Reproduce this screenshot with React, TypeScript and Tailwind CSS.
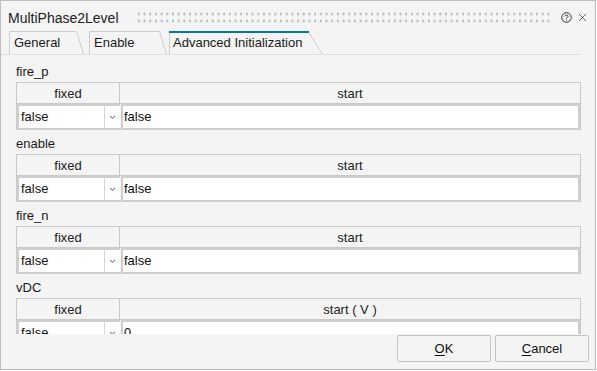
import { X } from "lucide-react";

const font = { fontFamily: '"Segoe UI", "Liberation Sans", Arial, sans-serif' };

interface ParamProps {
  name: string;
  startLabel?: string;
  value: string;
}

function Param({ name, startLabel = "start", value }: ParamProps) {
  return (
    <div className="pt-[4px]">
      <div className="h-[20px] text-[13px] leading-[19px] text-[#1a1a1a]">{name}</div>
      <div className="border border-[#c9c9c9] bg-[#f4f4f4]">
        <div className="grid grid-cols-[103px_1fr] h-[21px] border-b border-[#c9c9c9] text-[13px] leading-[21px] text-[#222]">
          <div className="text-center border-r border-[#c9c9c9]">fixed</div>
          <div className="text-center">{startLabel}</div>
        </div>
        <div className="grid grid-cols-[103px_1fr] gap-[1px] h-[25px]">
          <div className="flex bg-white border-2 border-[#cfcfcf] border-r-0">
            <div className="flex-1 pl-[2px] text-[13px] leading-[22px] text-[#111]">false</div>
            <div className="w-[16px] border-l border-[#d6d6d6] flex items-center justify-center">
              <svg width="7" height="5" viewBox="0 0 7 5">
                <path d="M1 1 L3.5 3.5 L6 1" fill="none" stroke="#9a9a9a" strokeWidth="1.2" />
              </svg>
            </div>
          </div>
          <div className="bg-white border-2 border-[#cfcfcf] pl-[1px] text-[13px] leading-[22px] text-[#111]">
            {value}
          </div>
        </div>
      </div>
    </div>
  );
}

function Tab({ label, width, active }: { label: string; width: number; active?: boolean }) {
  const slant = active ? 14 : 7;
  return (
    <div className="relative h-[23px] text-[13px] leading-[24px] text-[#1a1a1a]" style={{ width }}>
      <svg className="absolute inset-0" width={width} height={23}>
        <path
          d={`M0.5 23 L0.5 ${active ? 1 : 0.5} L${width - slant - 0.5} ${active ? 1 : 0.5} L${width - 0.5} 23`}
          fill="none"
          stroke="#cdcdcd"
          strokeWidth="1"
        />
        {active && <path d={`M0 1 L${width - slant} 1`} stroke="#0a74a6" strokeWidth="2" />}
      </svg>
      <span className={active ? "relative pl-[4px]" : "relative pl-[5px]"}>{label}</span>
    </div>
  );
}

export default function App() {
  return (
    <div style={font} className="w-[597px] h-[371px] bg-white">
      <div className="w-[596px] h-[370px] border border-[#bdbdbd] bg-[#f4f4f4] flex flex-col">
        <div className="h-[30px] flex items-center pt-[3px] pl-[7px] pr-[6px]">
          <span className="text-[14px] text-[#222] leading-none">MultiPhase2Level</span>
          <div className="flex-1 ml-[17px] mr-[10px] h-[12px] bg-[radial-gradient(circle,#a8a8a8_1px,transparent_1.2px)] bg-[length:5.7px_7px] bg-[position:0_-1.5px]" />
          <svg width="11" height="11" viewBox="0 0 11 11" className="mr-[4px]">
            <circle cx="5.5" cy="5.5" r="4.8" fill="none" stroke="#333" strokeWidth="1" />
            <path d="M3.9 4.3 C3.9 2.5 7.1 2.5 7.1 4.3 C7.1 5.4 5.5 5.4 5.5 6.5" fill="none" stroke="#333" strokeWidth="1" />
            <circle cx="5.5" cy="8.1" r="0.6" fill="#333" />
          </svg>
          <X size={13} strokeWidth={1.4} color="#333" />
        </div>
        <div className="h-[24px] flex items-end pl-[8px] border-b border-[#dedede] mr-[15px]">
          <Tab label="General" width={75} />
          <div className="w-[5px]" />
          <Tab label="Enable" width={78} />
          <div className="w-[2px]" />
          <Tab label="Advanced Initialization" width={154} active />
        </div>
        <div className="flex-1 overflow-hidden pt-[3px] pl-[15px] pr-[14px]">
          <Param name="fire_p" value="false" />
          <Param name="enable" value="false" />
          <Param name="fire_n" value="false" />
          <Param name="vDC" startLabel="start ( V )" value="0" />
        </div>
        <div className="h-[35px] flex justify-end gap-[4px] pt-[1px] pr-[6px]">
          <button className="w-[94px] h-[27px] border border-[#c4c4c4] rounded-[2px] bg-[#f4f4f4] text-[13px] text-[#111]">
            <span className="underline underline-offset-2">O</span>K
          </button>
          <button className="w-[94px] h-[27px] border border-[#c4c4c4] rounded-[2px] bg-[#f4f4f4] text-[13px] text-[#111]">
            <span className="underline underline-offset-2">C</span>ancel
          </button>
        </div>
      </div>
    </div>
  );
}
